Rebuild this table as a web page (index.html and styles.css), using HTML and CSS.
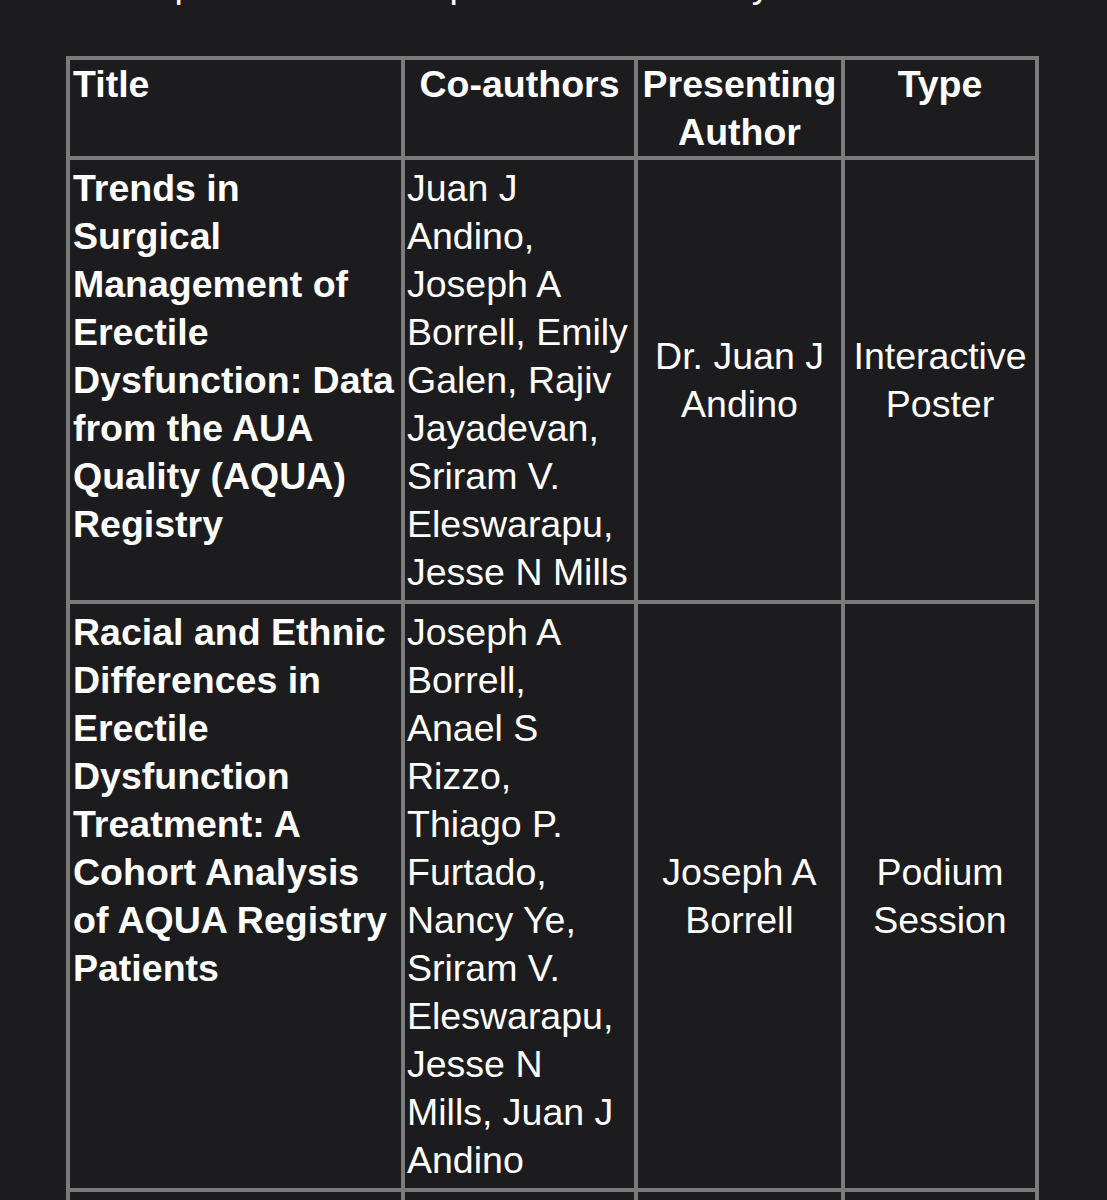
FILE: index.html
```html
<!DOCTYPE html>
<html lang="en">
<head>
<meta charset="utf-8">
<title>Abstracts</title>
<link rel="stylesheet" href="styles.css">
</head>
<body>
<main class="page">
  <p class="intro">Three presentations in person on their day.</p>
  <table class="abstracts">
    <colgroup>
      <col class="c-title">
      <col class="c-authors">
      <col class="c-presenter">
      <col class="c-type">
    </colgroup>
    <thead>
      <tr>
        <th class="h-left">Title</th>
        <th>Co-authors</th>
        <th>Presenting<br>Author</th>
        <th>Type</th>
      </tr>
    </thead>
    <tbody>
      <tr>
        <td class="title">Trends in<br>Surgical<br>Management of<br>Erectile<br>Dysfunction: Data<br>from the AUA<br>Quality (AQUA)<br>Registry</td>
        <td class="authors">Juan J<br>Andino,<br>Joseph A<br>Borrell, Emily<br>Galen, Rajiv<br>Jayadevan,<br>Sriram V.<br>Eleswarapu,<br>Jesse N Mills</td>
        <td class="center">Dr. Juan J<br>Andino</td>
        <td class="center">Interactive<br>Poster</td>
      </tr>
      <tr>
        <td class="title">Racial and Ethnic<br>Differences in<br>Erectile<br>Dysfunction<br>Treatment: A<br>Cohort Analysis<br>of AQUA Registry<br>Patients</td>
        <td class="authors">Joseph A<br>Borrell,<br>Anael S<br>Rizzo,<br>Thiago P.<br>Furtado,<br>Nancy Ye,<br>Sriram V.<br>Eleswarapu,<br>Jesse N<br>Mills, Juan J<br>Andino</td>
        <td class="center">Joseph A<br>Borrell</td>
        <td class="center">Podium<br>Session</td>
      </tr>
      <tr>
        <td class="title">&nbsp;</td>
        <td class="authors">&nbsp;</td>
        <td class="center">&nbsp;</td>
        <td class="center">&nbsp;</td>
      </tr>
    </tbody>
  </table>
</main>
</body>
</html>
```
FILE: styles.css
```css
html, body {
  margin: 0;
  padding: 0;
  background: #1c1c1e;
}

body {
  color: #ffffff;
  font-family: "Liberation Sans", Arial, Helvetica, sans-serif;
  font-size: 37.5px;
  line-height: 48px;
  overflow: hidden;
}

.page {
  padding-left: 66px;
}

.intro {
  margin: -40px 0 48px 0;
  white-space: nowrap;
}

.abstracts {
  table-layout: fixed;
  width: 973px;
  border-collapse: separate;
  border-spacing: 0;
  border: 2px solid #7b7b7b;
}

.c-title { width: 335px; }
.c-authors { width: 233px; }
.c-presenter { width: 207px; }
.c-type { width: 194px; }

.abstracts th,
.abstracts td {
  border: 2px solid #7b7b7b;
  white-space: nowrap;
}

.abstracts th {
  font-weight: 700;
  text-align: center;
  vertical-align: top;
  padding: 0 2px;
}

.abstracts th.h-left {
  text-align: left;
  padding-left: 3px;
}

.abstracts td {
  padding: 4px 2px;
  vertical-align: top;
  text-align: left;
}

.abstracts td.title {
  font-weight: 700;
  padding-left: 3px;
}

.abstracts td.authors {
  padding-left: 2px;
}

.abstracts td.center {
  text-align: center;
  vertical-align: middle;
}
```
